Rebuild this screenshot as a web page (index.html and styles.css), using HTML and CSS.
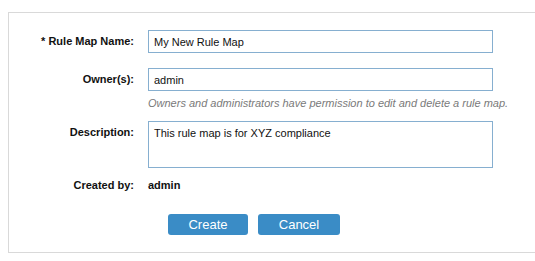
FILE: index.html
```html
<!DOCTYPE html>
<html lang="en">
<head>
    <meta charset="UTF-8">
    <title>New Rule Map</title>
<link rel="stylesheet" href="styles.css">
</head>
<body>
<div class="rule_map_box">
    <div class="form_row">
        <label class="form_label">* Rule Map Name:</label>
        <input class="form_input" type="text" value="My New Rule Map">
    </div>
    <div class="form_row owner_row">
        <label class="form_label">Owner(s):</label>
        <div>
            <input class="form_input" type="text" value="admin">
            <div class="hint">Owners and administrators have permission to edit and delete a rule map.</div>
        </div>
    </div>
    <div class="form_row desc_row">
        <label class="form_label">Description:</label>
        <textarea class="form_input form_area">This rule map is for XYZ compliance</textarea>
    </div>
    <div class="form_row created_row">
        <label class="form_label">Created by:</label>
        <span class="created_value">admin</span>
    </div>
    <div class="button_row">
        <button class="blue_button create_button">Create</button>
        <button class="blue_button">Cancel</button>
    </div>
</div>
</body>
</html>
```
FILE: styles.css
```css
body{
    margin: 0;
    background-color: white;
    font-family: 'Liberation Sans', Arial, sans-serif;
    color: #111;
}

.rule_map_box{
    margin: 12px 0 0 8px;
    border: 1px solid #d9d9d9;
    border-right: none;
    height: 241px;
    box-sizing: border-box;
    padding-top: 17px;
}

.form_row{
    display: grid;
    grid-template-columns: 125px 345px;
    column-gap: 14px;
}

.owner_row{
    margin-top: 15px;
}

.desc_row{
    margin-top: 11px;
}

.form_label{
    text-align: right;
    font-weight: bold;
    font-size: 11px;
    line-height: 13px;
    padding-top: 5px;
}

.form_input{
    display: block;
    width: 345px;
    height: 23px;
    box-sizing: border-box;
    border: 1px solid #86afd0;
    border-radius: 0;
    padding: 0 5px;
    margin: 0;
    font-family: 'Liberation Sans', Arial, sans-serif;
    font-size: 11px;
    color: #111;
    outline: none;
}

.form_area{
    height: 47px;
    resize: none;
    padding-top: 5px;
}

.hint{
    font-style: italic;
    font-size: 11px;
    line-height: 13px;
    color: #7a7a7a;
    margin-top: 6px;
    white-space: nowrap;
}

.created_row{
    margin-top: 11px;
}

.created_row .form_label{
    padding-top: 0;
}

.created_value{
    font-weight: bold;
    font-size: 11px;
    line-height: 13px;
}

.button_row{
    margin-top: 22px;
    padding-left: 159px;
    display: flex;
    gap: 10px;
}

.blue_button{
    background-color: #3a8cc6;
    border: none;
    border-radius: 3px;
    color: white;
    width: 82px;
    height: 21px;
    padding: 0;
    font-family: 'Liberation Sans', Arial, sans-serif;
    font-size: 13px;
    line-height: 21px;
}

.create_button{
    width: 80px;
}
```
